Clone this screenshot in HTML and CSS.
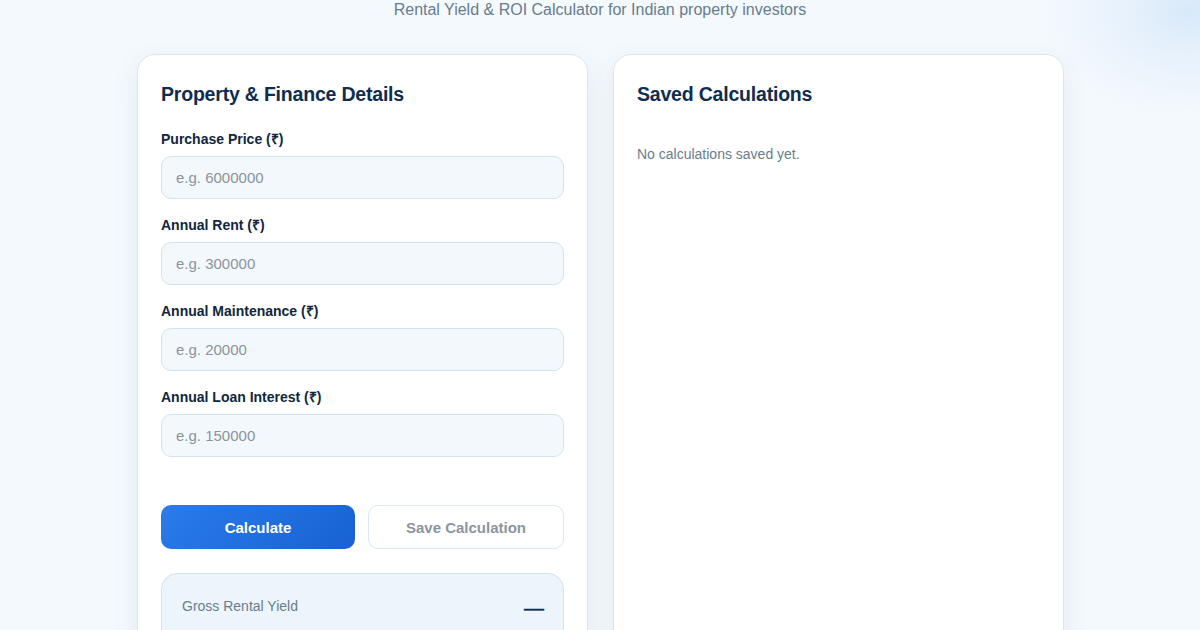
FILE: index.html
```html
<!DOCTYPE html>
<html lang="en">
<head>
<meta charset="utf-8">
<title>Rental Yield &amp; ROI Calculator</title>
<link rel="stylesheet" href="styles.css">
</head>
<body>
<header class="header">
  <p class="subtitle">Rental Yield &amp; ROI Calculator for Indian property investors</p>
</header>
<main class="layout">
  <section class="card">
    <h2 class="card-title">Property &amp; Finance Details</h2>
    <div class="field">
      <label class="label">Purchase Price (₹)</label>
      <input class="input" type="text" placeholder="e.g. 6000000">
    </div>
    <div class="field">
      <label class="label">Annual Rent (₹)</label>
      <input class="input" type="text" placeholder="e.g. 300000">
    </div>
    <div class="field">
      <label class="label">Annual Maintenance (₹)</label>
      <input class="input" type="text" placeholder="e.g. 20000">
    </div>
    <div class="field">
      <label class="label">Annual Loan Interest (₹)</label>
      <input class="input" type="text" placeholder="e.g. 150000">
    </div>
    <div class="actions">
      <button class="btn btn-primary">Calculate</button>
      <button class="btn btn-secondary">Save Calculation</button>
    </div>
    <div class="result">
      <div class="result-row">
        <span class="result-label">Gross Rental Yield</span>
        <span class="result-value">—</span>
      </div>
    </div>
  </section>
  <section class="card">
    <h2 class="card-title">Saved Calculations</h2>
    <p class="empty">No calculations saved yet.</p>
  </section>
</main>
</body>
</html>
```

FILE: styles.css
```css
* { box-sizing: border-box; }
html, body { height: 100%; }
body {
  margin: 0;
  font-family: "Liberation Sans", Arial, sans-serif;
  background:
    radial-gradient(ellipse 150px 110px at 1190px 10px, rgba(214, 232, 250, 0.95) 0%, rgba(224, 237, 251, 0.6) 45%, rgba(244, 249, 253, 0) 100%),
    #f4f9fd;
  color: #0f2d4f;
  overflow: hidden;
}
.header {
  text-align: center;
}
.subtitle {
  margin: 0;
  font-size: 16px;
  line-height: 19px;
  color: #687c90;
}
.layout {
  display: flex;
  gap: 25px;
  width: 927px;
  height: 700px;
  margin: 35px 0 0 calc(50% - 463px);
}
.card {
  flex: 1 1 0;
  background: #ffffff;
  border: 1px solid #d8e6ef;
  border-radius: 18px;
  padding: 24px 23px 24px;
  box-shadow: 0 8px 28px rgba(30, 80, 120, 0.08);
}
.card-title {
  margin: 0 0 22px;
  font-size: 19.5px;
  line-height: 30px;
  font-weight: 700;
  letter-spacing: -0.2px;
  color: #0f2d4f;
}
.field {
  display: flex;
  flex-direction: column;
  margin-bottom: 18px;
}
.label {
  font-size: 14px;
  line-height: 17px;
  font-weight: 700;
  color: #10263d;
  margin-bottom: 8px;
}
.input {
  height: 43px;
  border: 1px solid #d3e3ee;
  border-radius: 10px;
  background: #f3f8fc;
  padding: 0 14px;
  font-family: "Liberation Sans", Arial, sans-serif;
  font-size: 15px;
  color: #0f2d4f;
  outline: none;
}
.input::placeholder { color: #8a949c; }
.actions {
  display: flex;
  gap: 13px;
  margin-top: 48px;
}
.btn {
  flex: 1 1 0;
  height: 44px;
  border-radius: 10px;
  font-family: "Liberation Sans", Arial, sans-serif;
  font-size: 15px;
  font-weight: 700;
  cursor: pointer;
}
.btn-primary {
  border: none;
  color: #ffffff;
  background: linear-gradient(135deg, #2a7bec 0%, #1862d3 100%);
}
.btn-secondary {
  border: 1px solid #dbe6ef;
  background: #ffffff;
  color: #8b959f;
}
.result {
  margin-top: 24px;
  border: 1px solid #d3e3ee;
  border-radius: 16px;
  background: #ebf5fb;
  padding: 22px 19px 22px 20px;
  min-height: 120px;
}
.result-row {
  display: flex;
  justify-content: space-between;
  align-items: center;
}
.result-label {
  font-size: 14px;
  line-height: 17px;
  color: #6a7c8e;
}
.result-value {
  font-size: 20px;
  font-weight: 400;
  color: #0f2d4f;
  line-height: 20px;
  -webkit-text-stroke: 0.4px #0f2d4f;
  position: relative;
  top: 2px;
}
.empty {
  margin: 37px 0 0;
  font-size: 14px;
  line-height: 17px;
  color: #6a7c8e;
}
```
